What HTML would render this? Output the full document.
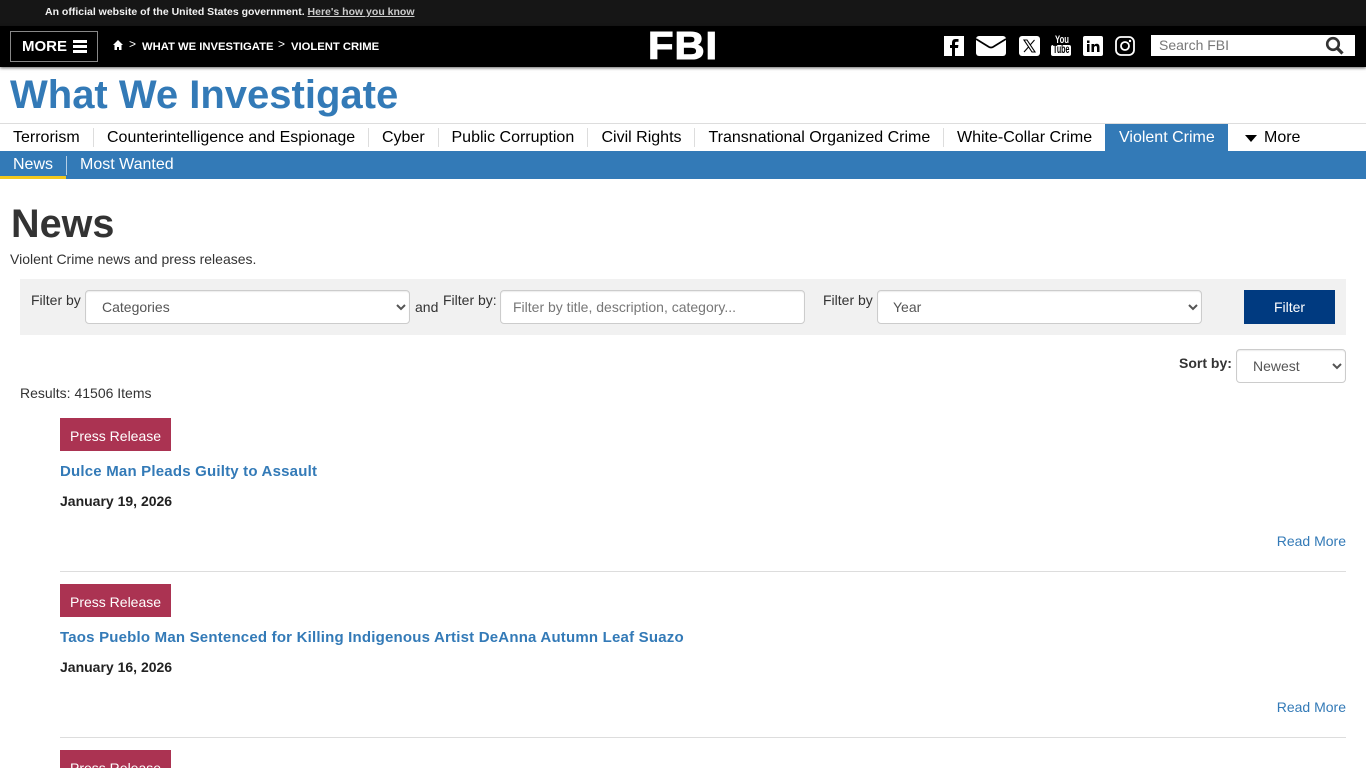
<!DOCTYPE html>
<html lang="en"><head><meta charset="utf-8"><title>News — FBI</title>
<style>
*{box-sizing:border-box}
html,body{margin:0;padding:0;width:1366px;height:768px;overflow:hidden;background:#fff;font-family:"Liberation Sans",Arial,sans-serif;color:#333}
.a{position:absolute;white-space:nowrap;line-height:1}
a{text-decoration:none;color:inherit}
#page{position:relative;width:1366px;height:768px;overflow:hidden}
.nav{font-size:16px;color:#000;top:130px}
.sep{position:absolute;width:1px;background:#ddd;top:128px;height:19px}
select,input{font-family:"Liberation Sans",Arial,sans-serif;position:absolute;background:#fff;border:1px solid #ccc;border-radius:4px;font-size:14px;color:#555;box-shadow:inset 0 1px 1px rgba(0,0,0,.075);margin:0}
select{padding:6px 12px}
input{padding:6px 12px}
input::placeholder{color:#777;opacity:1}
.tag{position:absolute;left:60px;width:111px;height:33px;background:#ab3352;color:#fff;font-size:14px;line-height:36px;padding-left:10px}
.ttl{font-size:15px;font-weight:700;color:#337ab7;left:60px;letter-spacing:.2px}
.dt{font-size:14px;font-weight:700;color:#222;left:60px}
.rm{font-size:14px;color:#337ab7;right:20px}
.hr{position:absolute;left:60px;width:1286px;height:1px;background:#ddd}
.lbl{font-size:14px;color:#333}
</style></head><body><div id="page">
<div style="position:absolute;left:0;top:0;width:1366px;height:26px;background:#161616"></div>
<div class="a" style="left:45px;top:7px;font-size:10.5px;font-weight:700;color:#f2f2f2">An official website of the United States government. <a href="#" style="color:#ccc;text-decoration:underline;font-weight:700">Here's how you know</a></div>
<div style="position:absolute;left:0;top:26px;width:1366px;height:41px;background:#000;box-shadow:0 1px 3px rgba(0,0,0,.6)"></div>
<div style="position:absolute;left:10px;top:31px;width:88px;height:31px;border:1px solid #888"></div>
<div class="a" style="left:22px;top:39px;font-size:15px;font-weight:700;color:#fff">MORE</div>
<svg style="position:absolute;left:73px;top:40px" width="14" height="13"><path d="M0 0h14v3H0zM0 5h14v3H0zM0 10h14v3H0z" fill="#fff"/></svg>
<svg style="position:absolute;left:113px;top:40px" width="10" height="10" viewBox="0 0 10 10"><path d="M5 0L0 5h1.500v5h2.500V7h2v3h2.500V5H10z" fill="#fff"/></svg>
<div class="a" style="left:129px;top:38px;font-size:12px;color:#fff">&gt;</div>
<div class="a" style="left:142px;top:42px;font-size:11.25px;font-weight:700;color:#fff">WHAT WE INVESTIGATE</div>
<div class="a" style="left:278px;top:38px;font-size:12px;color:#fff">&gt;</div>
<div class="a" style="left:291px;top:42px;font-size:11.25px;font-weight:700;color:#fff">VIOLENT CRIME</div>
<div class="a" style="left:648px;top:27px;font-size:39px;font-weight:700;color:#fff;letter-spacing:.9px;-webkit-text-stroke:1.1px #fff;transform-origin:left top;transform:scaleX(1.07)">FBI</div>
<svg style="position:absolute;left:944px;top:36px" width="20" height="20" viewBox="0 0 20 20"><rect width="20" height="20" fill="#fff"/><path d="M11 20v-8h3l.4-3H11V7.200c0-1 .4-1.500 1.500-1.500h2V3h-3C9 3 8 4.700 8 7v2H6v3h2v8z" fill="#000"/></svg>
<svg style="position:absolute;left:976px;top:36px" width="30" height="20" viewBox="0 0 30 20"><rect width="30" height="20" rx="3" fill="#fff"/><path d="M0 3L13 11Q15 12 17 11L30 3" fill="none" stroke="#000" stroke-width="1.800"/></svg>
<svg style="position:absolute;left:1019px;top:36px" width="21" height="20" viewBox="0 0 21 20"><rect width="21" height="20" rx="3" fill="#fff"/><path d="M5 4h3l8 12h-3zM15.500 4l-4.500 5.200M9.500 11L5 16" fill="none" stroke="#000" stroke-width="1.100"/></svg>
<div class="a" style="left:1055px;top:35px;font-size:11px;font-weight:700;color:#fff;transform:scaleX(.7);transform-origin:left top">You</div>
<div style="position:absolute;left:1051px;top:45px;width:20px;height:11px;background:#fff;border-radius:2px"></div>
<div class="a" style="left:1053px;top:45px;font-size:11.5px;font-weight:700;color:#000;transform:scaleX(.62);transform-origin:left top">Tube</div>
<svg style="position:absolute;left:1083px;top:36px" width="20" height="20" viewBox="0 0 20 20"><rect width="20" height="20" rx="2" fill="#fff"/><path d="M4 8h2.500v8H4zM4 4.500h2.500V7H4zM8.500 8H11v1.200C11.600 8.300 12.500 7.800 13.600 7.800c2 0 2.900 1.200 2.900 3.400V16H14v-4.300c0-1.100-.4-1.700-1.300-1.700S11 10.700 11 11.700V16H8.500z" fill="#000"/></svg>
<svg style="position:absolute;left:1115px;top:36px" width="20" height="20" viewBox="0 0 20 20"><rect x="1" y="1" width="18" height="18" rx="5" fill="none" stroke="#fff" stroke-width="1.800"/><circle cx="10" cy="10" r="4" fill="none" stroke="#fff" stroke-width="1.800"/><circle cx="15" cy="5" r="1.200" fill="#fff"/></svg>
<div style="position:absolute;left:1151px;top:35px;width:204px;height:21px;background:#fff"></div>
<div class="a" style="left:1159px;top:38px;font-size:14px;color:#777">Search FBI</div>
<svg style="position:absolute;left:1325px;top:36px" width="19" height="19" viewBox="0 0 19 19"><circle cx="8" cy="8" r="5.800" fill="none" stroke="#333" stroke-width="2.600"/><path d="M12.500 12.500L17.500 17.500" stroke="#333" stroke-width="3.200"/></svg>

<div class="a" style="left:10px;top:73px;font-size:40px;font-weight:700;color:#337ab7;line-height:45px">What We Investigate</div>

<div style="position:absolute;left:0;top:123px;width:1366px;height:1px;background:#ddd"></div>
<div class="a nav" style="left:13px">Terrorism</div><div class="sep" style="left:93px"></div>
<div class="a nav" style="left:107px">Counterintelligence and Espionage</div><div class="sep" style="left:368px"></div>
<div class="a nav" style="left:382px">Cyber</div><div class="sep" style="left:438px"></div>
<div class="a nav" style="left:451.5px">Public Corruption</div><div class="sep" style="left:587px"></div>
<div class="a nav" style="left:601.5px">Civil Rights</div><div class="sep" style="left:694px"></div>
<div class="a nav" style="left:708.5px">Transnational Organized Crime</div><div class="sep" style="left:943px"></div>
<div class="a nav" style="left:957px">White-Collar Crime</div>
<div style="position:absolute;left:1105px;top:124px;width:123px;height:27px;background:#337ab7"></div>
<div class="a nav" style="left:1119px;color:#fff">Violent Crime</div>
<svg style="position:absolute;left:1245px;top:135px" width="12" height="7"><path d="M0 0h12L6 7z" fill="#000"/></svg>
<div class="a nav" style="left:1264px">More</div>

<div style="position:absolute;left:0;top:151px;width:1366px;height:28px;background:#337ab7"></div>
<div style="position:absolute;left:0;top:176px;width:66px;height:3px;background:#f2c81e"></div>
<div class="a" style="left:13px;top:157px;font-size:16px;color:#fff">News</div>
<div style="position:absolute;left:66px;top:156px;width:1px;height:19px;background:#b5cfe6"></div>
<div class="a" style="left:80px;top:157px;font-size:16px;color:#fff">Most Wanted</div>

<div class="a" style="left:11px;top:202px;font-size:39.6px;font-weight:700;color:#333;line-height:44px">News</div>
<div class="a" style="left:10px;top:252px;font-size:14px;color:#333">Violent Crime news and press releases.</div>

<div style="position:absolute;left:20px;top:279px;width:1326px;height:56px;background:#f1f1f1"></div>
<div class="a lbl" style="left:31px;top:293px">Filter by</div>
<select style="left:85px;top:290px;width:325px;height:34px"><option>Categories</option></select>
<div class="a lbl" style="left:415px;top:300px">and</div>
<div class="a lbl" style="left:443px;top:293px">Filter by:</div>
<input style="left:500px;top:290px;width:305px;height:34px" placeholder="Filter by title, description, category...">
<div class="a lbl" style="left:823px;top:293px">Filter by</div>
<select style="left:877px;top:290px;width:325px;height:34px;padding-left:11px"><option>Year</option></select>
<div class="a" style="left:1244px;top:290px;width:91px;height:34px;background:#003a80;color:#fff;font-size:14px;line-height:34px;text-align:center">Filter</div>

<div class="a" style="left:1179px;top:356px;font-size:14px;font-weight:700;color:#333">Sort by:</div>
<select style="left:1236px;top:349px;width:110px;height:34px"><option>Newest</option></select>
<div class="a lbl" style="left:20px;top:386px">Results: 41506 Items</div>

<div class="tag" style="top:418px">Press Release</div>
<div class="a ttl" style="top:464px">Dulce Man Pleads Guilty to Assault</div>
<div class="a dt" style="top:494px">January 19, 2026</div>
<div class="a rm" style="top:534px">Read More</div>
<div class="hr" style="top:571px"></div>

<div class="tag" style="top:584px">Press Release</div>
<div class="a ttl" style="top:630px">Taos Pueblo Man Sentenced for Killing Indigenous Artist DeAnna Autumn Leaf Suazo</div>
<div class="a dt" style="top:660px">January 16, 2026</div>
<div class="a rm" style="top:700px">Read More</div>
<div class="hr" style="top:737px"></div>

<div class="tag" style="top:750px">Press Release</div>
</div></body></html>
